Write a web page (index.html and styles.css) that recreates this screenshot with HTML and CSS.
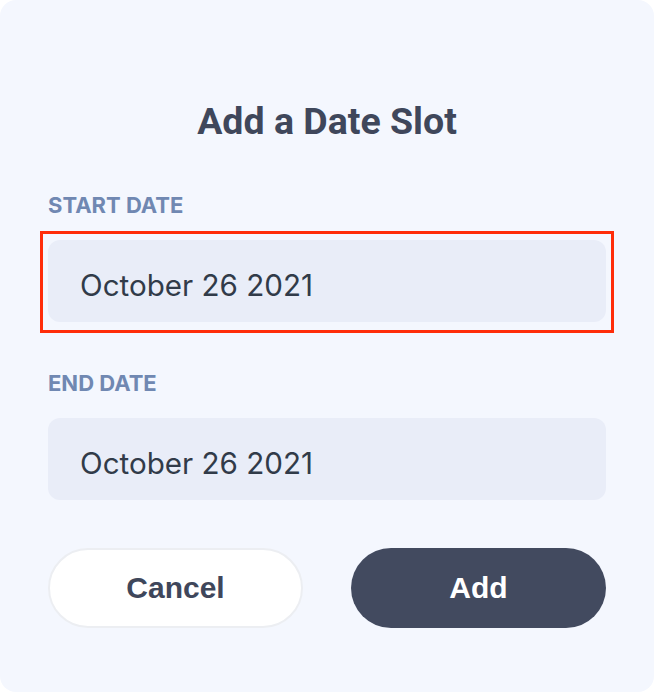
FILE: index.html
```html
<!DOCTYPE html>
<html lang="en">
<head>
<meta charset="utf-8">
<title>Add a Date Slot</title>
<link rel="stylesheet" href="styles.css">
</head>
<body>
<div class="card">
  <h1 class="title">Add a Date Slot</h1>
  <div class="field field-start">
    <div class="label">START DATE</div>
    <div class="focus-ring">
      <div class="input">October 26 2021</div>
    </div>
  </div>
  <div class="field field-end">
    <div class="label">END DATE</div>
    <div class="input">October 26 2021</div>
  </div>
  <div class="actions">
    <button class="btn btn-cancel">Cancel</button>
    <button class="btn btn-add">Add</button>
  </div>
</div>
</body>
</html>
```

FILE: styles.css
```css
html, body {
  margin: 0;
  padding: 0;
  background: #ffffff;
}

.card {
  box-sizing: border-box;
  width: 654px;
  height: 692px;
  background: #f4f7fe;
  border-radius: 16px;
  padding: 98px 48px 0;
  display: flex;
  flex-direction: column;
}

.title {
  margin: 0;
  font-family: Roboto, "Liberation Sans", sans-serif;
  font-weight: 700;
  font-size: 37.5px;
  line-height: 46px;
  color: #3f475b;
  text-align: center;
}

.field {
  display: flex;
  flex-direction: column;
  gap: 22px;
}

.field-start {
  margin-top: 48px;
}

.field-end {
  margin-top: 48px;
}

.label {
  font-family: Inter, "Noto Sans", sans-serif;
  font-weight: 700;
  font-size: 22px;
  line-height: 26px;
  color: #7088b2;
}

.focus-ring {
  margin: -9px -8px -11px;
  padding: 6px 5px 8px;
  border: 3px solid #ff2d0a;
}

.input {
  box-sizing: border-box;
  height: 82px;
  border-radius: 12px;
  background: #e9edf8;
  padding: 8px 32px 0;
  display: flex;
  align-items: center;
  font-family: Inter, "Noto Sans", sans-serif;
  font-size: 29.6px;
  color: #313b49;
}

.actions {
  margin-top: 48px;
  display: grid;
  grid-template-columns: 1fr 1fr;
  gap: 48px;
}

.btn {
  box-sizing: border-box;
  height: 80px;
  border-radius: 40px;
  font-family: "Liberation Sans", Arial, sans-serif;
  font-weight: 700;
  font-size: 30px;
  cursor: pointer;
}

.btn-cancel {
  background: #ffffff;
  border: 2px solid #eceef2;
  color: #3f475b;
}

.btn-add {
  background: #424a5f;
  border: none;
  color: #ffffff;
}
```
